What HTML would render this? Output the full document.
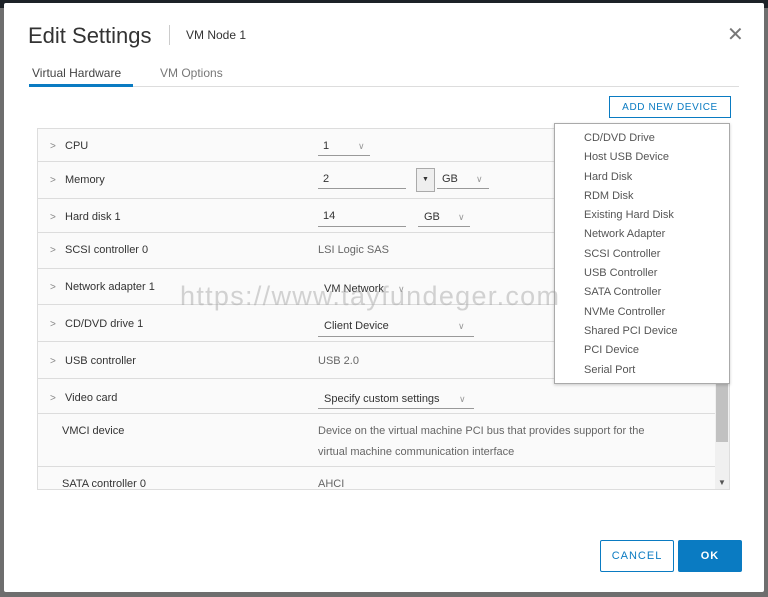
<!DOCTYPE html>
<html><head><style>
*{margin:0;padding:0;box-sizing:border-box}
body{width:768px;height:597px;background:#6e6e6e;font-family:"Liberation Sans",sans-serif;position:relative;overflow:hidden;color:#333}
.top{position:absolute;left:0;top:0;width:768px;height:8px;background:#1d2227}
.dlg{position:absolute;left:4px;top:3px;width:760px;height:589px;background:#fff;border-radius:2px}
.a{position:absolute;white-space:nowrap}
.row{position:absolute;left:38px;width:677px;border-top:1px solid #dcdcdc;font-size:11px;color:#333}
.row .a{margin-top:2px}
.chev{color:#888;font-size:10px}
.ul{position:absolute;border-bottom:1px solid #999}
.dd{color:#999;font-size:9px}
.menu{position:absolute;left:554px;top:123px;width:176px;height:261px;background:#fff;border:1px solid #aaa;box-shadow:0 1px 3px rgba(0,0,0,.2)}
.menu div{position:absolute;left:29px;font-size:11px;color:#555;margin-top:1px}
</style></head><body>
<div class="top"></div>
<div class="dlg"></div>
<div class="a" style="left:28px;top:23px;font-size:22px;color:#333">Edit Settings</div>
<div class="a" style="left:169px;top:25px;width:1px;height:20px;background:#ccc"></div>
<div class="a" style="left:186px;top:28px;font-size:12px;color:#333">VM Node 1</div>
<div class="a" style="left:727px;top:22px;font-size:20px;color:#777">✕</div>
<div class="a" style="left:32px;top:66px;font-size:12px;color:#444">Virtual Hardware</div>
<div class="a" style="left:160px;top:66px;font-size:12px;color:#777">VM Options</div>
<div class="a" style="left:29px;top:86px;width:710px;height:1px;background:#ddd"></div>
<div class="a" style="left:29px;top:84px;width:104px;height:3px;background:#0a7bc2"></div>
<div class="a" style="left:609px;top:96px;width:122px;height:22px;border:1px solid #0a7bc2;color:#0a7bc2;font-size:10px;letter-spacing:.6px;text-align:center;line-height:22px">ADD NEW DEVICE</div>
<div class="a" style="left:37px;top:128px;width:693px;height:362px;border:1px solid #ddd;background:#fafafa"></div>
<div class="a" style="left:715px;top:129px;width:14px;height:360px;background:#f0f0f0"></div>
<div class="a" style="left:716px;top:370px;width:12px;height:72px;background:#c1c1c1"></div>
<div class="a" style="left:718px;top:478px;font-size:8px;color:#555">▼</div>

<div class="row" style="top:129px;height:32px;border-top:none"><span class="a chev" style="left:12px;top:10px">&gt;</span><span class="a" style="left:27px;top:9px">CPU</span><span class="a" style="left:285px;top:9px">1</span><span class="a dd" style="left:320px;top:10px">∨</span><div class="ul" style="left:280px;top:26px;width:52px"></div></div>
<div class="row" style="top:161px;height:37px"><span class="a chev" style="left:12px;top:11px">&gt;</span><span class="a" style="left:27px;top:10px">Memory</span><span class="a" style="left:285px;top:9px">2</span><div class="ul" style="left:280px;top:26px;width:88px"></div><div class="a" style="left:378px;top:4px;width:19px;height:24px;border:1px solid #aaa;background:#eee;font-size:7px;text-align:center;line-height:22px">▼</div><span class="a" style="left:404px;top:9px">GB</span><span class="a dd" style="left:438px;top:10px">∨</span><div class="ul" style="left:399px;top:26px;width:52px"></div></div>
<div class="row" style="top:198px;height:34px"><span class="a chev" style="left:12px;top:11px">&gt;</span><span class="a" style="left:27px;top:10px">Hard disk 1</span><span class="a" style="left:285px;top:9px">14</span><div class="ul" style="left:280px;top:27px;width:88px"></div><span class="a" style="left:386px;top:10px">GB</span><span class="a dd" style="left:420px;top:11px">∨</span><div class="ul" style="left:380px;top:27px;width:52px"></div></div>
<div class="row" style="top:232px;height:36px"><span class="a chev" style="left:12px;top:10px">&gt;</span><span class="a" style="left:27px;top:9px">SCSI controller 0</span><span class="a" style="left:280px;top:9px;color:#666">LSI Logic SAS</span></div>
<div class="row" style="top:268px;height:36px"><span class="a chev" style="left:12px;top:11px">&gt;</span><span class="a" style="left:27px;top:10px">Network adapter 1</span><span class="a" style="left:286px;top:12px">VM Network</span><span class="a dd" style="left:360px;top:13px">∨</span></div>
<div class="row" style="top:304px;height:37px"><span class="a chev" style="left:12px;top:12px">&gt;</span><span class="a" style="left:27px;top:11px">CD/DVD drive 1</span><span class="a" style="left:286px;top:13px">Client Device</span><span class="a dd" style="left:420px;top:14px">∨</span><div class="ul" style="left:280px;top:31px;width:156px"></div></div>
<div class="row" style="top:341px;height:37px"><span class="a chev" style="left:12px;top:12px">&gt;</span><span class="a" style="left:27px;top:11px">USB controller</span><span class="a" style="left:280px;top:11px;color:#666">USB 2.0</span></div>
<div class="row" style="top:378px;height:35px"><span class="a chev" style="left:12px;top:12px">&gt;</span><span class="a" style="left:27px;top:11px">Video card</span><span class="a" style="left:286px;top:12px">Specify custom settings</span><span class="a dd" style="left:421px;top:13px">∨</span><div class="ul" style="left:280px;top:29px;width:156px"></div></div>
<div class="row" style="top:413px;height:53px"><span class="a" style="left:24px;top:9px">VMCI device</span><span class="a" style="left:280px;top:9px;color:#666">Device on the virtual machine PCI bus that provides support for the</span><span class="a" style="left:280px;top:30px;color:#666">virtual machine communication interface</span></div>
<div class="row" style="top:466px;height:23px"><span class="a" style="left:24px;top:9px">SATA controller 0</span><span class="a" style="left:280px;top:9px;color:#666">AHCI</span></div>

<div class="menu">
<div style="top:7px">CD/DVD Drive</div><div style="top:26px">Host USB Device</div><div style="top:46px">Hard Disk</div><div style="top:65px">RDM Disk</div><div style="top:84px">Existing Hard Disk</div><div style="top:103px">Network Adapter</div><div style="top:123px">SCSI Controller</div><div style="top:142px">USB Controller</div><div style="top:161px">SATA Controller</div><div style="top:181px">NVMe Controller</div><div style="top:200px">Shared PCI Device</div><div style="top:219px">PCI Device</div><div style="top:239px">Serial Port</div>
</div>

<div class="a" style="left:180px;top:281px;font-size:27px;color:rgba(160,160,160,.45);letter-spacing:1.3px">https://www.tayfundeger.com</div>

<div class="a" style="left:600px;top:540px;width:74px;height:32px;border:1px solid #0a7bc2;border-radius:2px;color:#0a7bc2;font-size:11px;letter-spacing:1px;text-align:center;line-height:31px">CANCEL</div>
<div class="a" style="left:678px;top:540px;width:64px;height:32px;background:#0a7bc2;border-radius:2px;color:#fff;font-size:11px;font-weight:bold;letter-spacing:1px;text-align:center;line-height:33px">OK</div>
</body></html>
